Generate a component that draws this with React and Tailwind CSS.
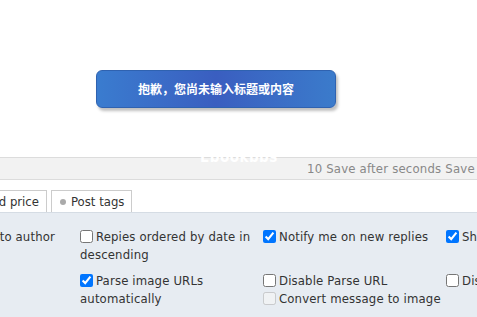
import React from "react";

const Check = ({ checked, disabled, label, sub }) => {
  return (
    <div className="text-[13px] leading-[18px] tracking-[0.15px] text-[#333]">
      <label className={disabled ? "text-[#555]" : ""}>
        <input
          type="checkbox"
          defaultChecked={checked}
          disabled={disabled}
          className="mr-[3px] ml-0 h-[13px] w-[13px] align-[-2px]"
        />
        {label}
      </label>
      {sub && (
        <div className="whitespace-nowrap">
          <label>
            <input
              type="checkbox"
              disabled={sub.disabled}
              className="mr-[3px] ml-0 h-[13px] w-[13px] align-[-2px]"
            />
            {sub.label}
          </label>
        </div>
      )}
    </div>
  );
};

const App = () => {
  return (
    <div
      className="relative h-[317px] w-[477px] overflow-hidden bg-white"
      style={{ fontFamily: '"DejaVu Sans Condensed", "DejaVu Sans", Tahoma, sans-serif' }}
    >
      {/* top white area */}
      <div className="h-[157px]"></div>

      {/* toast */}
      <div
        className="absolute left-[96px] top-[70px] flex h-[38px] w-[240px] items-center justify-center rounded-[6px] border border-[#2f62b0] bg-gradient-to-r from-[#3a7ccf] via-[#3a5ec0] to-[#3b7bcb] text-[12px] font-bold text-white shadow-[2px_3px_3px_rgba(0,0,0,0.25)]"
        style={{ fontFamily: '"Noto Sans CJK SC", sans-serif' }}
      >
        抱歉，您尚未输入标题或内容
      </div>

      {/* save bar */}
      <div className="relative h-[23px] border-y border-[#dcdcdc] bg-[#f2f2f2]">
        <div className="absolute left-[200px] top-[-12px] text-[15px] font-bold tracking-[0.5px] text-white">
          Ebookbbs
        </div>
        <div className="whitespace-nowrap pl-[307px] text-[13px] leading-[21px] tracking-[0.2px] text-[#888]">
          10 Save after seconds Save
        </div>
      </div>

      {/* tabs */}
      <div className="flex h-[32px] items-end gap-[4px] bg-white">
        <div className="ml-[-32px] flex h-[22px] items-center whitespace-nowrap border border-b-0 border-[#ccc] px-[7px] text-[13px] text-[#333]">
          Fixed price
        </div>
        <div className="flex h-[22px] items-center gap-[5px] border border-b-0 border-[#ccc] pl-[8px] pr-[7px] text-[13px] text-[#333]">
          <span className="h-[6px] w-[6px] rounded-full bg-[#aaa]"></span>
          Post tags
        </div>
      </div>

      {/* options */}
      <div className="h-[105px] border-t border-[#d5dce4] bg-[#e7ecf2] pt-[15px]">
        <div className="ml-[-103px] grid grid-cols-[183px_183px_183px_183px] gap-y-[8px]">
          <div className="pr-[8px] text-right text-[13px] leading-[18px] tracking-[0.15px] text-[#333]">
            <span className="mr-[17px]">Send to author</span>
          </div>
          <div className="pr-[8px]">
            <Check label="Repies ordered by date in descending" />
          </div>
          <div className="pr-[8px]">
            <Check checked label="Notify me on new replies" />
          </div>
          <div className="pr-[8px] whitespace-nowrap">
            <Check checked label="Show signature" />
          </div>

          <div></div>
          <div className="pr-[8px]">
            <Check checked label="Parse image URLs automatically" />
          </div>
          <div className="pr-[8px]">
            <Check
              label="Disable Parse URL"
              sub={{ label: "Convert message to image", disabled: true }}
            />
          </div>
          <div className="pr-[8px] whitespace-nowrap">
            <Check label="Disable smilies" />
          </div>
        </div>
      </div>
    </div>
  );
};

export default App;
